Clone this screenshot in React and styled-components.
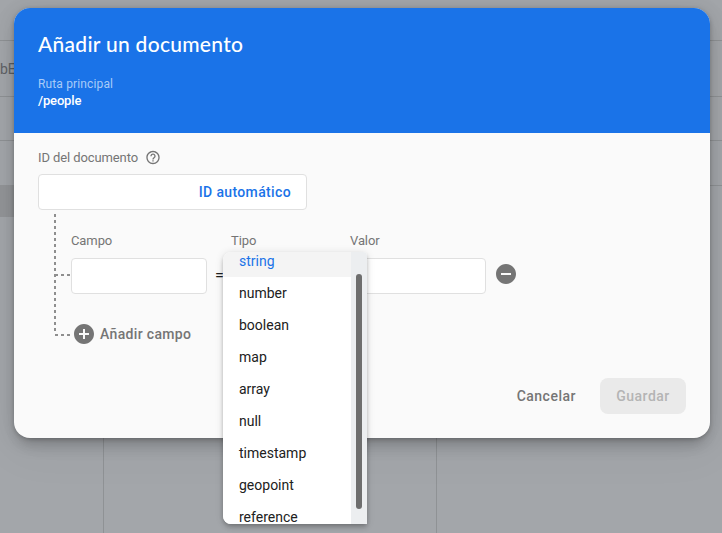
import React from "react";
import styled, { createGlobalStyle } from "styled-components";

const GlobalStyle = createGlobalStyle`
  * { box-sizing: border-box; }
  body { margin: 0; overflow: hidden; font-family: Roboto, "Liberation Sans", sans-serif; }
  button, input { font-family: inherit; margin: 0; padding: 0; }
`;

const line = "#8f9295";

const Screen = styled.div`
  position: relative;
  height: 533px;
  overflow: hidden;
  background: #a3a6aa;
  color: #5f6266;
`;
const Page = styled.div`
  height: 533px;
  display: flex;
  flex-direction: column;
`;
const PageBar = styled.div`
  height: ${(p) => p.$height}px;
  flex: none;
  display: flex;
  align-items: center;
  font-size: 14px;
  border-bottom: 1px solid ${line};
`;
const Columns = styled.div`
  flex: 1;
  display: grid;
  grid-template-columns: 104px 333px 1fr;
`;
const Column = styled.div`
  border-right: ${(p) => (p.$last ? 0 : 1)}px solid ${line};
`;
const ColumnHead = styled.div`
  height: 45px;
  border-bottom: ${(p) => (p.$ruled ? 1 : 0)}px solid ${line};
`;
const SelectedRow = styled.div`
  height: 32px;
  margin-top: -1px;
  background: #939598;
`;

const Dialog = styled.section`
  position: absolute;
  left: 14px;
  top: 8px;
  width: 696px;
  height: 430px;
  border-radius: 16px;
  background: #fafafa;
  box-shadow: 0 11px 15px -7px rgba(0, 0, 0, 0.2), 0 9px 46px 8px rgba(0, 0, 0, 0.04),
    0 4px 18px 3px rgba(0, 0, 0, 0.09), 0 1px 4px rgba(0, 0, 0, 0.22);
`;
const Header = styled.header`
  height: 125px;
  padding: 23px 24px 0;
  border-radius: 16px 16px 0 0;
  background: #1a73e8;
  color: #fff;
`;
const Title = styled.h1`
  height: 26px;
  margin: 0 0 19px;
  font: 500 21px/26px Lato, sans-serif;
  letter-spacing: 0.28px;
  white-space: nowrap;
`;
const PathLabel = styled.div`
  font-size: 12px;
  line-height: 16px;
  letter-spacing: 0.14px;
  color: #a8cbf8;
`;
const PathValue = styled.div`
  font-size: 13px;
  font-weight: 500;
  line-height: 17px;
  letter-spacing: -0.15px;
`;
const Form = styled.div`
  padding: 16px 24px 0;
`;
const Label = styled.label`
  display: flex;
  align-items: center;
  gap: 7px;
  height: 17px;
  font-size: 13px;
  letter-spacing: -0.1px;
  color: #757575;
  white-space: nowrap;
`;
const TextBox = styled.div`
  display: flex;
  align-items: center;
  justify-content: flex-end;
  width: ${(p) => p.$width}px;
  height: 36px;
  margin-top: ${(p) => p.$gap || 0}px;
  padding-right: 15px;
  border: 1px solid #e0e0e0;
  border-radius: 4px;
  background: #fff;
`;
const TextButton = styled.button`
  border: 0;
  background: none;
  font-size: 14px;
  font-weight: 500;
  line-height: 20px;
  letter-spacing: ${(p) => p.$spacing || 0.5}px;
  color: ${(p) => p.$color || "#757575"};
  white-space: nowrap;
`;
const Tree = styled.div`
  display: flex;
  margin: 4px 0 0 16px;
`;
const Trunk = styled.div`
  width: 17px;
  flex: none;
`;
const Branch = styled.div`
  height: ${(p) => p.$height}px;
  background:
    repeating-linear-gradient(to bottom, #8e8e8e 0 3px, transparent 3px 6px) 0 ${(p) => p.$shift}px / 2px 100% no-repeat,
    repeating-linear-gradient(to right, #8e8e8e 0 3px, transparent 3px 6px) 1px 100% / 15px 2px no-repeat;
`;
const Fields = styled.div`
  padding-top: 18px;
`;
const FieldGrid = styled.div`
  display: grid;
  grid-template-columns: 136px 24px 119px 136px 40px;
  grid-template-rows: 26px 36px;
  align-items: center;
`;
const FieldLabel = styled(Label)`
  align-self: start;
  grid-column: ${(p) => p.$column};
  grid-row: 1;
`;
const Cell = styled.div`
  grid-column: ${(p) => p.$column};
  grid-row: 2;
  display: flex;
  align-items: center;
`;
const Equals = styled(Cell)`
  padding: 0 0 1px 8px;
  font-size: 16px;
  color: #212121;
`;
const RemoveCell = styled(Cell)`
  padding: 0 0 4px 8px;
`;
const AddRow = styled.div`
  display: flex;
  align-items: center;
  gap: 4px;
  height: 24px;
  margin-top: 28px;
  padding-left: 1px;
`;
const Icon = styled.svg`
  display: block;
  flex: none;
  fill: #757575;
`;
const Actions = styled.footer`
  display: flex;
  justify-content: flex-end;
  align-items: center;
  gap: 24px;
  margin-top: 32px;
`;
const SaveButton = styled(TextButton)`
  width: 86px;
  height: 36px;
  border-radius: 8px;
  background: #eaeaea;
  color: #b4b4b4;
`;

const Menu = styled.div`
  position: absolute;
  left: 223px;
  top: 252px;
  width: 144px;
  height: 272px;
  display: grid;
  grid-template-columns: 128px 16px;
  overflow: hidden;
  border-radius: 8px 4px 0 8px;
  background: #fff;
  box-shadow: 0 2px 4px -1px rgba(0, 0, 0, 0.2), 0 4px 5px rgba(0, 0, 0, 0.1),
    0 1px 8px rgba(0, 0, 0, 0.12);
`;
const Options = styled.div`
  height: 272px;
  overflow: hidden;
`;
const Option = styled.div`
  height: 32px;
  padding-left: 16px;
  font-size: 14px;
  line-height: 32px;
  color: ${(p) => (p.$selected ? "#1a73e8" : "#212121")};
  background: ${(p) => (p.$selected ? "#f4f4f4" : "#fff")};
  &:first-child { margin-top: -7px; }
`;
const ScrollTrack = styled.div`
  background: #eceef0;
  padding: 22px 5px 0;
`;
const ScrollThumb = styled.div`
  height: 235px;
  border-radius: 3px;
  background: #6e6e6e;
`;

const types = ["string", "number", "boolean", "map", "array", "null", "timestamp", "geopoint", "reference"];

function HelpIcon() {
  return (
    <Icon width="16" height="16" viewBox="0 0.8 24 24">
      <path d="M11 18h2v-2h-2v2zm1-16C6.48 2 2 6.48 2 12s4.48 10 10 10 10-4.48 10-10S17.52 2 12 2zm0 18c-4.41 0-8-3.59-8-8s3.59-8 8-8 8 3.59 8 8-3.59 8-8 8zm0-14c-2.21 0-4 1.79-4 4h2c0-1.1.9-2 2-2s2 .9 2 2c0 2-3 1.75-3 5h2c0-2.25 3-2.5 3-5 0-2.21-1.79-4-4-4z" />
    </Icon>
  );
}

function CircleIcon({ plus }) {
  return (
    <Icon width="24" height="24" viewBox="0 0 24 24">
      <path
        d={
          plus
            ? "M12 2C6.48 2 2 6.48 2 12s4.48 10 10 10 10-4.48 10-10S17.52 2 12 2zm5 11h-4v4h-2v-4H7v-2h4V7h2v4h4v2z"
            : "M12 2C6.48 2 2 6.48 2 12s4.48 10 10 10 10-4.48 10-10S17.52 2 12 2zm5 11H7v-2h10v2z"
        }
      />
    </Icon>
  );
}

export default function App() {
  return (
    <Screen>
      <GlobalStyle />
      <Page>
        <PageBar $height={41} />
        <PageBar $height={56}>bE</PageBar>
        <PageBar $height={44} />
        <Columns>
          <Column>
            <ColumnHead />
            <SelectedRow />
          </Column>
          <Column>
            <ColumnHead $ruled />
          </Column>
          <Column $last>
            <ColumnHead $ruled />
          </Column>
        </Columns>
      </Page>
      <Dialog role="dialog">
        <Header>
          <Title>Añadir un documento</Title>
          <PathLabel>Ruta principal</PathLabel>
          <PathValue>/people</PathValue>
        </Header>
        <Form>
          <Label>
            ID del documento
            <HelpIcon />
          </Label>
          <TextBox $width={269} $gap={8}>
            <TextButton $color="#1a73e8" $spacing={0.36}>ID automático</TextButton>
          </TextBox>
          <Tree>
            <Trunk>
              <Branch $height={62} $shift={0} />
              <Branch $height={60} $shift={-2} />
            </Trunk>
            <Fields>
              <FieldGrid>
                <FieldLabel $column={1}>Campo</FieldLabel>
                <FieldLabel $column={3}>Tipo</FieldLabel>
                <FieldLabel $column={4}>Valor</FieldLabel>
                <Cell $column={1}>
                  <TextBox $width={136} />
                </Cell>
                <Equals $column={2}>=</Equals>
                <Cell $column={4}>
                  <TextBox $width={136} />
                </Cell>
                <RemoveCell $column={5}>
                  <CircleIcon />
                </RemoveCell>
              </FieldGrid>
              <AddRow>
                <CircleIcon plus />
                <TextButton $spacing={0.34}>Añadir campo</TextButton>
              </AddRow>
            </Fields>
          </Tree>
          <Actions>
            <TextButton>Cancelar</TextButton>
            <SaveButton disabled>Guardar</SaveButton>
          </Actions>
        </Form>
      </Dialog>
      <Menu role="listbox">
        <Options>
          {types.map((type, i) => (
            <Option key={type} $selected={i === 0}>
              {type}
            </Option>
          ))}
        </Options>
        <ScrollTrack>
          <ScrollThumb />
        </ScrollTrack>
      </Menu>
    </Screen>
  );
}
